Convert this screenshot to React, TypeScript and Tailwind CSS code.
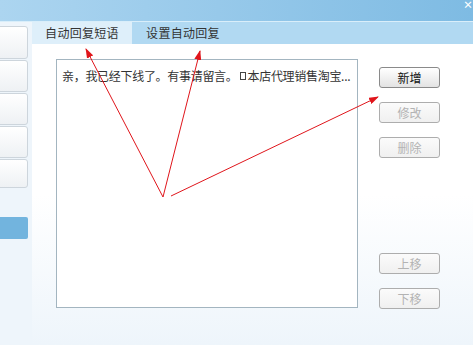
import React from "react";

const font = { fontFamily: '"Noto Sans CJK SC", "Noto Sans", sans-serif' };

function SideButton({ h }: { h: string }) {
  return (
    <div
      className={`${h} -ml-[6px] w-[34px] rounded-[3px] border border-[#cdd5dc] bg-gradient-to-b from-white to-[#eef1f4]`}
    />
  );
}

function ActionButton({ label, disabled, mt }: { label: string; disabled?: boolean; mt: string }) {
  return (
    <button
      className={`${mt} block h-[21px] w-[61px] rounded-[3px] border text-[12px] leading-none ${
        disabled
          ? "border-[#adadad] bg-gradient-to-b from-[#fbfbfb] to-[#f0f0f0] text-[#b3b3b3]"
          : "border-[#8a8a8a] bg-gradient-to-b from-white to-[#e3e3e3] text-[#111]"
      }`}
    >
      {label}
    </button>
  );
}

export default function App() {
  return (
    <div className="relative h-[345px] w-[473px] overflow-hidden bg-white" style={font}>
      {/* title bar */}
      <div className="relative h-[22px] border-b border-[#d9eefa] bg-gradient-to-r from-[#acd5f0] to-[#7ebbe3]">
        <span className="absolute right-0 top-0 text-[10px] font-bold leading-[10px] text-white">×</span>
      </div>

      <div className="flex h-[323px]">
        {/* sidebar */}
        <div className="flex w-[32px] flex-col bg-[#eef5fb] pt-[4px]">
          <div className="flex flex-col gap-[1px]">
            <SideButton h="h-[33px]" />
            <SideButton h="h-[32px]" />
            <SideButton h="h-[32px]" />
            <SideButton h="h-[32px]" />
            <SideButton h="h-[29px]" />
          </div>
          <div className="-ml-[6px] mt-[29px] h-[22px] w-[34px] rounded-[2px] bg-[#72b4de]" />
        </div>

        {/* main */}
        <div className="flex flex-1 flex-col">
          <div className="flex h-[22px] bg-[#b1d9f2] text-[12px] text-[#333]">
            <div className="flex w-[100px] items-center justify-center bg-[#deeffa] tracking-[0.3px]">
              自动回复短语
            </div>
            <div className="flex w-[102px] items-center justify-center tracking-[0.3px]">
              设置自动回复
            </div>
          </div>

          <div className="flex flex-1 bg-gradient-to-b from-white via-white to-[#eef5fb] pl-[24px] pt-[15px]">
            <div className="h-[249px] w-[302px] border border-[#a3b5c0] bg-white px-[5px] pt-[9px]">
              <div className="flex items-center whitespace-nowrap text-[12px] leading-[14px] tracking-[-0.3px] text-[#333]">
                亲，我已经下线了。有事请留言。
                <span className="mx-[2px] inline-block h-[8px] w-[6px] border border-[#444]" />
                本店代理销售淘宝...
              </div>
            </div>

            <div className="ml-[21px] flex flex-col pt-[8px]">
              <ActionButton label="新增" mt="mt-0" />
              <ActionButton label="修改" mt="mt-[14px]" disabled />
              <ActionButton label="删除" mt="mt-[14px]" disabled />
              <ActionButton label="上移" mt="mt-[95px]" disabled />
              <ActionButton label="下移" mt="mt-[14px]" disabled />
            </div>
          </div>
        </div>
      </div>

      {/* annotation arrows */}
      <svg className="pointer-events-none absolute left-0 top-0" width="473" height="345">
        <defs>
          <marker id="head" markerWidth="10" markerHeight="7" refX="9" refY="3.5" orient="auto" markerUnits="userSpaceOnUse">
            <path d="M0,0 L10,3.5 L0,7 Z" fill="#e0151b" />
          </marker>
        </defs>
        <g stroke="#e0151b" strokeWidth="1" fill="none">
          <line x1="163" y1="197" x2="86" y2="49" markerEnd="url(#head)" />
          <line x1="163" y1="197" x2="200" y2="51" markerEnd="url(#head)" />
          <line x1="171" y1="196" x2="378" y2="97" markerEnd="url(#head)" />
        </g>
      </svg>
    </div>
  );
}
